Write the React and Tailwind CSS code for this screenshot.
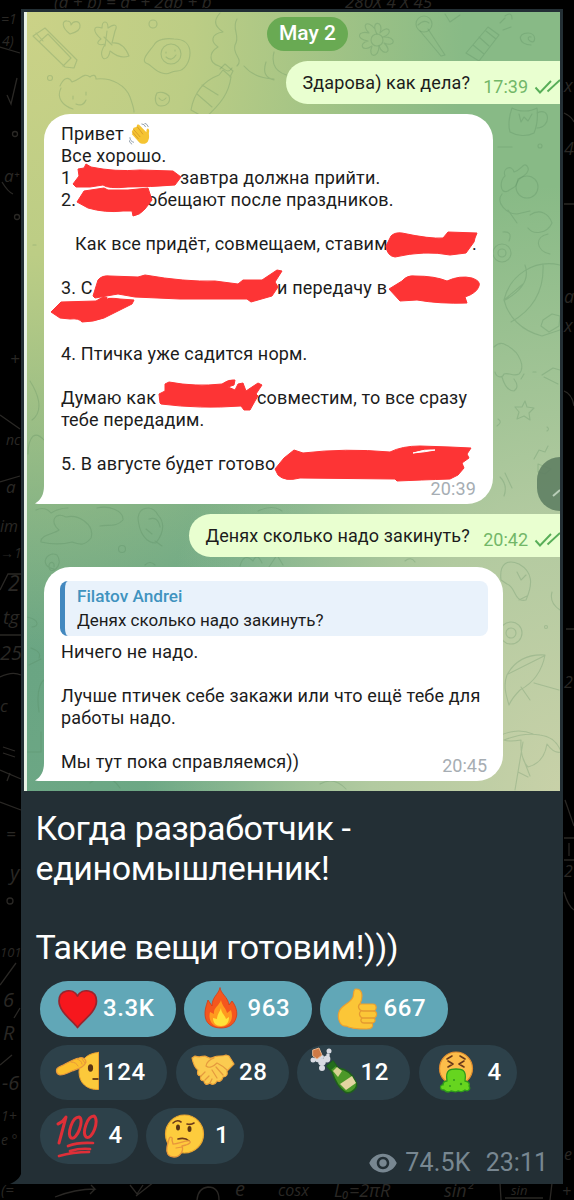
import React from 'react';
import { MdRemoveRedEye } from 'react-icons/md';

const App = () => (
    <div className="relative w-[574px] h-[1200px] bg-black overflow-hidden font-['Roboto','Noto_Sans',sans-serif]">

        <Formulas />

        {/* POST */}
        <div className="relative ml-[21px] mt-[9px] w-[542px] h-[1175px] bg-[#232f35] flex flex-col">
            <svg viewBox="0 0 12 14" className="absolute -left-[11px] bottom-0 w-3 h-3.5" fill="#232f35">
                <path d="M12 0C11 7 7 11 0 14h12z" />
            </svg>

            <Chat />

            <div className="pl-[14.5px] pt-[18px] text-[34px] leading-[39.7px] text-white tracking-[-0.4px]">
                <p>Когда разработчик -</p>
                <p>единомышленник!</p>
                <p>&nbsp;</p>
                <p>Такие вещи готовим!)))</p>
            </div>

            {/* REACTIONS */}
            <div className="absolute left-[18.5px] top-[972px] right-[15px] flex flex-col gap-2">
                <div className="flex gap-[8.5px]">
                    <Reaction active className="w-[136px]" icon={<Heart />} count="3.3K" />
                    <Reaction active className="w-[127.5px]" icon={<Fire />} count="963" />
                    <Reaction active className="w-[127.5px]" icon={<Thumb />} count="667" />
                </div>
                <div className="flex gap-[8.5px]">
                    <Reaction className="w-[127.5px]" icon={<Salute />} count="124" />
                    <Reaction className="w-[113px]" icon={<Handshake />} count="28" />
                    <Reaction className="w-[113px]" icon={<Champagne />} count="12" />
                    <Reaction className="w-[98px]" icon={<Sick />} count="4" />
                </div>
                <div className="flex gap-[8.5px]">
                    <Reaction className="w-[98px]" icon={<Hundred />} count="4" />
                    <Reaction className="w-[98px]" icon={<Thinking />} count="1" />
                    <div className="ml-auto mt-[38px] flex items-center text-[25px] leading-[34px] text-[#788791]">
                        <MdRemoveRedEye className="w-[30px] h-[30px] mr-[7px]" />
                        <span className="mr-[15px] tracking-[0.2px]">74.5K</span>
                        <span>23:11</span>
                    </div>
                </div>
            </div>
        </div>
    </div>
);

const Chat = () => (
    <div className="relative ml-[3px] mt-[3px] w-[536px] h-[779px] shrink-0 overflow-hidden border-l-[3px] border-[#e9f2e6] flex flex-col bg-[radial-gradient(ellipse_at_0%_0%,#cbd287_0%,#bccd85_22%,transparent_58%),radial-gradient(ellipse_at_100%_100%,#c8d1a8_0%,#b2caa0_25%,transparent_55%),radial-gradient(ellipse_at_0%_85%,#6aa583_0%,#6ea986_30%,transparent_65%)] bg-[#88ba86]">
        <Wallpaper />

        <div className="relative mt-[5px] ml-[240px] w-[81px] h-[34px] rounded-full bg-[#69aa53] text-white text-[21px] font-medium flex items-center justify-center whitespace-nowrap">
            May 2
        </div>

        <Outgoing className="w-[274px]" text="Здарова) как дела?" time="17:39" />

        {/* LONG MESSAGE */}
        <div className="relative ml-[17px] mt-2.5 w-[449px] h-[390px] shrink-0 rounded-[26px] rounded-bl-none bg-white pl-[17px] pt-[9px] text-[18px] leading-[22px] tracking-[0.16px] text-[#1c1c1c] whitespace-nowrap">
            <Tail />
            <p className="flex items-center">Привет <Wave /></p>
            <p>Все хорошо.</p>
            <p className="flex"><span className="w-[119px]">1</span>завтра должна прийти.</p>
            <p className="flex"><span className="w-[86px]">2.</span>обещают после праздников.</p>
            <p>&nbsp;</p>
            <p className="flex pl-[14px]"><span className="w-[397px]">Как все придёт, совмещаем, ставим</span>.</p>
            <p>&nbsp;</p>
            <p className="flex"><span className="w-[216px]">3. С</span>и передачу в</p>
            <p>&nbsp;</p>
            <p>&nbsp;</p>
            <p>4. Птичка уже садится норм.</p>
            <p>&nbsp;</p>
            <p className="flex"><span className="w-[196px]">Думаю как</span>совместим, то все сразу</p>
            <p>тебе передадим.</p>
            <p>&nbsp;</p>
            <p>5. В августе будет готово</p>
            <Scribbles />
            <span className="absolute right-[17px] bottom-[4px] text-[18px] text-[#a6adb3]">20:39</span>
        </div>

        <Outgoing className="w-[371px]" text="Денях сколько надо закинуть?" time="20:42" />

        {/* REPLY */}
        <div className="relative ml-[17px] mt-2.5 w-[459px] h-[214px] shrink-0 rounded-[26px] rounded-bl-none bg-white pl-[16px] pt-[14px] text-[18px] leading-[22px] text-[#1c1c1c] whitespace-nowrap">
            <Tail />
            <div className="w-[428px] h-[55px] rounded-[8px] bg-[#e9f2fb] border-l-[5px] border-[#4288bf] pl-[12px] pt-[4px]">
                <p className="text-[17.2px] font-medium text-[#4093bf]">Filatov Andrei</p>
                <p className="mt-[2px] text-[17px]">Денях сколько надо закинуть?</p>
            </div>
            <div className="pl-[1px] pt-[5px] tracking-[0.16px]">
                <p>Ничего не надо.</p>
                <p>&nbsp;</p>
                <p>Лучше птичек себе закажи или что ещё тебе для</p>
                <p>работы надо.</p>
                <p>&nbsp;</p>
                <p>Мы тут пока справляемся))</p>
            </div>
            <span className="absolute right-[16px] bottom-[4px] text-[18px] text-[#a6adb3]">20:45</span>
        </div>

        {/* SCROLL BUTTON */}
        <div className="absolute -right-[23px] top-[445px] w-[46px] h-[54px] rounded-full bg-[#5f7f63]/90">
            <svg viewBox="0 0 46 54" className="w-full h-full" fill="none" stroke="#b9cdb8" strokeWidth="2">
                <path d="M16 39l7-6" />
            </svg>
        </div>
    </div>
);

const Outgoing = ({ text, time, className }) => (
    <div className={`relative self-end mt-2.5 h-[43px] shrink-0 rounded-l-full rounded-tr-[10px] bg-[#e9ffd0] pl-[16.5px] flex items-center text-[18px] text-[#1c1c1c] whitespace-nowrap ${className}`}>
        <span className="grow -mt-[1px] tracking-[0.12px]">{text}</span>
        <span className="text-[#72b768] mt-[8px]">{time}</span>
        <svg viewBox="0 0 26 16" className="w-[26px] h-4 ml-[6px] mt-[9px]" fill="none" stroke="#58ae58" strokeWidth="1.9">
            <path d="M1.500 8.500l4.500 5L17 2M13.500 12.500L26 1" />
        </svg>
    </div>
);

const Tail = () => (
    <svg viewBox="0 0 12 18" className="absolute -left-[9px] bottom-0 w-3 h-[18px]" fill="#fff">
        <path d="M9 0C9 8 6 14 0 17.500L3 18h9V0z" />
    </svg>
);

const Reaction = ({ icon, count, active, className }) => (
    <div className={`h-[55.5px] shrink-0 rounded-full pl-[14px] flex items-center text-white text-[24px] font-medium ${active ? 'bg-[#61a7b7]' : 'bg-[#2d414a]'} ${className}`}>
        <div className="w-11 h-11 shrink-0">{icon}</div>
        <span className="ml-[5.5px] min-w-[25px] text-center tracking-[0.6px] -mt-[1px]">{count}</span>
    </div>
);

/* red marker strokes over the private parts */
const Scribbles = () => (
    <svg viewBox="44 114 449 390" className="absolute left-0 top-0 w-[449px] h-[390px] overflow-visible" fill="#fd3435" stroke="#fd3435" strokeWidth="1" strokeLinejoin="round">
        <path d="M73 184L79 176 78 169 84 168 86 164 91 167Q115 172 140 170L173 171 181 177 175 185Q150 187 128 187 108 189 103 185L90 187 76 187z" />
        <path d="M77 202L84 191 104 188 108 190 128 190 148 188 152 200 145 209Q140 215 133 216L132 211 123 211Q105 213 88 208z" />
        <path d="M386 246L391 236Q395 232 402 233 430 239 443 238L448 232 477 233 475 238 474 242 466 253 450 255Q425 250 395 257 387 256 386 246z" />
        <path d="M389 289L402 281Q407 275 415 276 435 276 447 281 460 275 472 278 481 281 479 286 477 293 465 297L467 303Q440 304 417 300L400 301z" />
        <path d="M93 296L98 280Q102 275 110 276L138 277 145 275Q185 282 215 281L238 284 243 280 262 280 277 270 282 271 275 282 278 287 272 296 251 302 247 299 180 299 135 297 118 294 95 298z" />
        <path d="M51 312L61 302 96 301 103 297 120 299 134 300 132 304Q120 310 104 318 93 322 82 322 79 318 70 319L60 318z" />
        <path d="M160 403L159 394 165 391 165 384 169 382Q195 387 222 384 229 379 235 380L234 385 228 387 235 390 238 384 243 383 246 391 258 383 262 385 256 394 258 396 255 401 250 410 244 410 241 406Q200 409 161 404z" />
        <path d="M275 469L284 458 294 450 303 453Q345 448 390 452 402 446 420 446L450 447 471 448 467 454 469 458 462 463 464 468 458 475 450 479Q420 480 397 481L395 479 300 478Q285 482 278 475z" />
        <path d="M413 453q12-4 22-3-10 2-22 3zM107 298q8-3 13-1" fill="#fff" stroke="#fff" strokeWidth="1" />
    </svg>
);

/* chat background doodles */
const Wallpaper = () => (
    <svg viewBox="27 12 533 779" className="absolute inset-0 w-[533px] h-[779px]" fill="none" stroke="#4f8258" strokeOpacity="0.24" strokeWidth="1.1" strokeLinecap="round" strokeLinejoin="round">
        <path d="M33 36l12-8 32 32-3 8-9-1zM39 42l9-8M63 66l8-8M36 33l7 8M48 34l23 24" />
        <path d="M70 34c-10-8-7-14-3-13 3 0 4 2 4 4 2-4 8-5 9 0 1 6-6 8-10 9z" />
        <path d="M101 39c-9-8-8-14 1-11 0-8 6-8 6 0 7-5 10-3 7 3l-3 12c7-1 13 3 17 13-7 3-14-1-19-5-1 8-7 10-8 5-2-5 2-9 3-12-7 2-10-1-4-5zM104 37l8 8M107 31l-2 15" />
        <path d="M154 45c3-6 13-7 20-6 10 0 16 5 16 14 0 8-5 18-13 18s-7 5-15 2c-8-2-10-8-16-10-5-3 2-10 8-18z" />
        <circle cx="171" cy="54" r="10" /><path d="M166 52v1M175 50v1M166 57q6 5 10-2" />
        <path d="M220 13c-8 9-4 14 3 19-13 2-12 10-5 15-10 6-9 16 1 19 7 4 9 8 13 2M237 19c-6 10 4 17-2 26-3 10 9 14 2 21" />
        <path d="M223 70l8 7c-2 15-9 26-26 41l-14-8c3-17 12-29 28-35zM202 85l16 10M197 94l15 13M220 69l5-5 8 7-3 6" />
        <path d="M60 86c3-7 8-11 12-4 9-3 12-10 18-5 2-2 6-3 6 2 16-2 30 7 34 18 2 6 4 11 4 15M61 88c-5 10 2 18 12 21M73 96v3M86 92v3M76 104q7 3 10-4" />
        <path d="M157 93c4-2 9 0 12 3 2 6-2 10-8 10s-7-8-4-13zM159 98q3 5 7 0" /><circle cx="50" cy="78" r="2.5" /><circle cx="153" cy="24" r="4" />
        <circle cx="377" cy="40" r="6" /><path d="M377 34c-8-14 8-14 3-1 9-10 14 1 3 4 14-1 13 11 1 6 10 9-1 14-5 3 0 13-12 12-7 0-10 7-14-3-4-5-13-2-10-11 1-8-8-8-2-14 6-4" />
        <circle cx="424" cy="24" r="8" /><path d="M420 31l21 25 4-1-17-26M418 25q6-6 11-2" />
        <path d="M466 53l22-26 11 8-20 26zM473 45l11 9M479 37l10 9M486 31l10 8M500 23l5-5M503 30l8-3M505 16q7-5 7 3" />
        <path d="M531 45c-12 0-15-12-3-12 9 0 8 12 2 8-3-2-2-5 1-4" /><path d="M445 14l5 8 10-7M291 76q-22-4-17-24M274 80q-13-3-8-18M244 66q10 12 30 13" />
        <path d="M512 108c-3 8-4 18-2 24 7 4 17 5 24 1 3-7 4-16 3-25-7 4-18 4-25 0zM537 113c14-7 14 15 0 15M519 114l2 8 3-5 4 4 4-7" />
        <path d="M505 176c-3-8 7-12 9-4 8-2 9-10 13-6 4 5-2 10-9 13-1 10-6 8-10 12-9 4-8-12-3-15z" /><circle cx="527" cy="187" r="11" /><path d="M502 194c-7 9 5 20 15 20l13-3M530 215c10-7 19-1 22 8-5 11-19 12-24 5M508 210l9 13M498 147h14" /><circle cx="540" cy="146" r="2" />
        <circle cx="502" cy="253" r="9" /><circle cx="502" cy="253" r="4" /><path d="M503 232q10-1 6 9M548 234c-14 3-12 17 2 20" />
        <path d="M560 265c-26-6-50 10-56 35 4 17 18 31 38 36l18-6M525 265q7 20-20 35M543 264q2 39-32 58M504 300l19-16M543 320l9-6 8 2-1 10-10 6-8-6z" />
        <path d="M494 347q6-6 12-2c15 7 19 23 13 29-6 3-10-2-15 0-2 5-8 3-9-2M502 377q4 14 12 14 6-4 0-12M533 372h3M524 374l-3 5M542 375l11-7 7 2M544 377l14 7" />
        <path d="M525 401l2 6 7 1-5 5 1 7-6-4-7 3 2-7-4-5h7zM498 419q5 3-1 7M547 427q3 2 0 4M534 459l5-9 6 2 3-6M538 464l13 5-6 5-7-2zM500 477q8 8 4 19M512 488l-7-15" />
        <path d="M32 420c13-10 5-28-2-39M44 440c-13-14-16 6-16 14M33 245h3" />
        <path d="M36 510q9-4 15 3 8-5 17-5M41 542c-1-7 13-8 18-12-10-8-4-19 7-13 13-3 29 8 25 21-7 9-12 6-19 4-11 3-22 2-31 0zM97 508c12-3 27 3 26 12-7 8-17 4-23 6" />
        <path d="M138 518c1-11 14-14 20-3 9 10 4 20-2 28-10 0-17-10-18-25zM149 519q9-3 11 8M146 529l6 5M155 541l7 5" /><circle cx="122" cy="549" r="3.5" />
        <path d="M54 569c-16-3-7-19 3-14 8 11-8 22-8 11 0-5 6-5 5 1M145 565q5-5 10 0M182 578h9v-11M240 566q4-14 13-5 4-9 9 2M269 567l8-12 6 10M282 511q-9-7-24 0" />
        <path d="M27 617c14 3 11 10 5 10M29 665l12-6M39 712c-4-27 5-32 5-32M27 752h14v-20M31 648q11 4 8 10" />
        <path d="M501 580c-2-17 7-21 18-16 14 8 14 20 7 36-12 3-10-13-19-16zM517 572l4 8 5-5M519 600l8-4M552 592q-3 11 8 18" /><circle cx="511" cy="633" r="11" /><circle cx="511" cy="633" r="5" />
        <path d="M507 675c8-15 21-21 38-20-3 16-12 28-25 35-8 8-11 15-11 15-3-10-6-20-2-30zM508 674l36-18M534 683l25 7M521 687l9 13" /><circle cx="546" cy="627" r="1.5" />
        <path d="M504 740q20-8 36-5 16 2 21 17-7 2-14-8-3 19-19 23-8-8-7-27-12 2-17 0M523 742l-8 48M518 772l10 5M523 758l7 18M499 736q18-9 34-2" />
        <path d="M90 783q18-13 30 5M320 784q14-8 26 5M405 561q6-5 10 1" />
    </svg>
);

/* dark formulas behind the post */
const Formulas = () => (
    <svg viewBox="0 0 574 1200" className="absolute inset-0 w-[574px] h-[1200px] font-['Open_Sans',sans-serif] italic" fill="#2a2825" fontSize="17">
        <text x="54" y="8">(a + b) = a² + 2ab + b</text>
        <text x="345" y="8">280X  4  X  45</text>
        <text x="1" y="24" fontSize="14">=1</text>
        <text x="2" y="46" fontSize="14">4)</text>
        <text x="4" y="182">a⁺</text>
        <text x="10" y="365">+</text>
        <text x="6" y="445" fontSize="14">nc</text>
        <text x="6" y="493">a</text>
        <text x="0" y="532" fontSize="16">im</text>
        <text x="0" y="558" fontSize="14">→1</text>
        <text x="8" y="591" fontSize="21">2</text>
        <text x="3" y="624" fontSize="19">tg</text>
        <text x="0" y="660" fontSize="20">25</text>
        <text x="0" y="712">c</text>
        <text x="6" y="840">=</text>
        <text x="10" y="880" fontSize="20">y</text>
        <text x="0" y="957" fontSize="13">101</text>
        <text x="3" y="1007" fontSize="20">6</text>
        <text x="3" y="1040" fontSize="20">R</text>
        <text x="2" y="1090" fontSize="20">-6</text>
        <text x="1" y="1121" fontSize="14">1+</text>
        <text x="1" y="1145" fontSize="14">e °</text>
        <text x="1" y="1195" fontSize="15">(=</text>
        <text x="564" y="92" fontSize="18">x</text>
        <text x="564" y="155" fontSize="18">4</text>
        <text x="564" y="303" fontSize="18">a</text>
        <text x="564" y="332" fontSize="18">x</text>
        <text x="564" y="688" fontSize="16">2</text>
        <text x="564" y="877" fontSize="16">2</text>
        <text x="564" y="1160" fontSize="16">e</text>
        <text x="235" y="1196" fontSize="20">e</text>
        <text x="278" y="1196" fontSize="16">cosx</text>
        <text x="334" y="1197" fontSize="18">L₀=2πR</text>
        <text x="444" y="1197" fontSize="18">sin²</text>
        <text x="511" y="1195" fontSize="13">sin</text>
        <text x="562" y="1197" fontSize="16">+</text>
        <g fill="none" stroke="#2a2825" strokeWidth="1.3">
            <path d="M0 47l20 6M7 95l4 9 6-26M2 182q6 10 11 12M0 415l20 14M0 482l20-6M0 590l8-16h13M0 635h21M0 677q12-6 21-2M3 747l12 4M3 753l12 4M0 770l21 9M10 773l-3 8M0 802l21 8M0 985l16-22M14 1018l6-10M0 1065l12-10" />
            <circle cx="10" cy="901" r="3" /><circle cx="15" cy="134" r="2.5" /><circle cx="17" cy="217" r="2.5" />
            <path d="M55 1197q20-8 40-8l-4-4M95 1189l-5 5M130 1185l7 9 6-9M136 1196l18-14M197 1200q1-12 11-13 11 0 11 13M500 1183l1 17M552 1183l-2 17M505 1198h38M564 113q8 4 10 9M564 204h10M564 391q8 3 10 15M565 800l9 26M564 838h10M569 843v13M564 860h10M564 892q4 14 10 18M566 629h8" />
        </g>
    </svg>
);

const svgProps = { viewBox: '0 0 44 44', className: 'w-11 h-11 overflow-visible', strokeLinecap: 'round', strokeLinejoin: 'round' };

const Wave = () => (
    <svg viewBox="0 0 24 24" className="w-[22px] h-[22px] ml-[5px]" strokeLinecap="round">
        <path d="M3 12l8 9c3 3 9 2 10-2 2-4 0-6 1-10 0-4-3-4-3 0v1L11 2c-2-1-3 0-2 2L6 5c-1 0-2 1-1 2l-1 1c-1 1-1 1 0 3z" fill="#f5c432" />
        <path d="M9 4l6 8M5 7l7 8M4 10l6 7" stroke="#d89a28" strokeWidth="1" fill="none" />
        <path d="M14 1q3 0 4 3M17 0q3 1 4 4M1 16q0 4 4 5M0 19q1 3 3 4" stroke="#8b98a5" strokeWidth="1" fill="none" />
    </svg>
);

const Heart = () => (
    <svg {...svgProps}>
        <path d="M23.500 40.500C19 34 5 25 5 14 5 2.500 19 .5 23.500 9 28 .5 42.500 2.500 42.500 14c0 11-14.500 20-19 26.500z" fill="#f6171d" stroke="#99242d" strokeWidth="1.7" />
    </svg>
);

const Fire = () => (
    <svg {...svgProps}>
        <path d="M22 1c1 6 8 9 9 17l3-4c4 5 6 12 4 17-2 7-8 10-15 10S9 38 7.500 31C6 25 8 19 10 13l4 6C14 10 20 8 22 1z" fill="#f4561e" stroke="#d93a12" strokeWidth=".8" />
        <path d="M23 13c1 6 5 8 6 13l4-3c3 9-1 16-10 17-9 0-13-7-11-15l4 2c-1-6 5-8 7-14z" fill="#ff9a1f" />
        <path d="M23 21c0 5 4 7 5 11l3-2c0 6-3 9-8 9s-8-3-8-8l4 1c0-5 3-7 4-11z" fill="#ffe23a" />
    </svg>
);

const Thumb = () => (
    <svg {...svgProps}>
        <path d="M5 25c2-7 11-8 14-15 1-3 0-8 3-8 7 0 7 8 4 15h13c4 0 4 6 1 7 4 1 3 6 0 7 2 2 1 5-2 5 2 4-1 6-5 6-9 0-16 0-21-3-6 1-9-8-7-14z" fill="#fbc637" stroke="#eda02f" strokeWidth="1.2" />
        <path d="M26 17c-3 2-1 7 3 7h11M27 24c-3 2-1 7 2 7h11M28 31c-2 2-1 5 2 5h8" stroke="#e59a31" strokeWidth="1.3" fill="none" />
    </svg>
);

const Salute = () => (
    <svg {...svgProps}>
        <path d="M44.500 2.500v37C33 40 25 33 25 22 25 11 33 3 44.500 2.500z" fill="#fcc93b" stroke="#eda02f" strokeWidth="1" strokeLinejoin="miter" />
        <ellipse cx="36.5" cy="18" rx="2.6" ry="3.7" fill="#5a3413" />
        <path d="M38.500 29h6" stroke="#5a3413" strokeWidth="1.8" strokeLinecap="butt" />
        <path d="M5 17c5-2 14-8 20-9 4-1 7 1 7 4-2 6-9 7-14 9-4 2-8 4-12 4-4-1-5-6-1-8z" fill="#fbc02d" stroke="#e8983b" strokeWidth="1.2" />
        <path d="M17 12c4 0 6 2 7 4M23 9c3 1 5 3 5 5M28 9l3 4" stroke="#e8983b" strokeWidth="1" fill="none" />
    </svg>
);

const Handshake = () => (
    <svg {...svgProps}>
        <path d="M2 8l3-2c5 2 7 0 10 0 4 2 5 3 9 1s8 0 12-2l3 1 5 8-7 7c1 4-1 6-4 6-1 4-4 5-6 4-2 4-5 4-7 2-4 3-6 0-6-2-4 0-4-3-3-5-4 0-4-3-3-6C5 18 3 13 2 8z" fill="#fbcb50" stroke="#eda23a" strokeWidth="1.2" />
        <path d="M24 8c-4 1-8 5-8 8 3 3 8 0 11-3 4 2 7 4 10 7M26 17l7 8M22 20l5 8M11 26l4-4M15 30l4-4M20 33l2-4" stroke="#e59a3e" strokeWidth="1.2" fill="none" />
    </svg>
);

const Champagne = () => (
    <svg {...svgProps}>
        <g fill="#d8dbe2">
            <circle cx="2" cy="10" r="2.5" /><circle cx="7" cy="9" r="3.2" /><circle cx="11" cy="12" r="3.8" /><circle cx="16" cy="9" r="3.4" /><circle cx="18" cy="1" r="2.5" /><circle cx="17" cy="5" r="1.8" /><circle cx="11" cy="18" r="3" /><circle cx="11" cy="7" r="2" />
        </g>
        <path d="M2 0l6-2 3 7-5 4-4-3z" fill="#cf7a45" stroke="#eab58c" strokeWidth="1" />
        <path d="M16 16l6-5 5 7c8 1 14 5 18 14 3 6-6 13-11 10-6-4-10-11-13-20z" fill="#4c9828" stroke="#1e611b" strokeWidth="1.5" />
        <path d="M22 21l4-4 5 4-4 6z" fill="#d9d294" /><path d="M29 34l12-8 4 7-10 7z" fill="#e3d4a1" />
        <path d="M16 16l6-5 3 5-5 4z" fill="#246c1d" />
    </svg>
);

const Sick = () => (
    <svg {...svgProps}>
        <circle cx="23" cy="18.5" r="16.5" fill="#fdbd4a" stroke="#e18c2e" strokeWidth="1.2" />
        <path d="M14 9l5-3M32 9l-5-3M15 11l5 3-5 3M31 11l-5 3 5 3" stroke="#69381b" strokeWidth="1.6" fill="none" />
        <path d="M14 31c-2-12 4-12 9-12s11 0 9 12c6 1 4 5 4 5 2 3-1 6-4 4-3 3-5 1-7 1-3 2-5 0-7 0-3 2-6 0-7-1-5 0-4-6-1-5 0-3 2-4 4-4z" fill="#66d51f" stroke="#2d9a1b" strokeWidth="1.3" />
        <circle cx="21" cy="30" r="1" fill="#30961d" /><circle cx="28" cy="34" r="1.2" fill="#30961d" /><circle cx="17" cy="36" r=".9" fill="#30961d" />
    </svg>
);

const Hundred = () => (
    <svg {...svgProps} fill="none" stroke="#df2f38" strokeWidth="3">
        <path d="M4 10q5-2 8-7L5 29M25 3C18 3 13 20 17 24c6 3 14-19 8-21zM40 2c-7 0-12 17-8 21 6 4 14-17 8-21z" />
        <path d="M14 32q10-4 25-3M16 37q10-3 20-2M5 42q14-4 30-4" strokeWidth="2.7" />
    </svg>
);

const Thinking = () => (
    <svg {...svgProps}>
        <circle cx="24.5" cy="20" r="19" fill="#fdcc3d" stroke="#eba62f" strokeWidth="1.2" />
        <ellipse cx="18" cy="13.5" rx="2" ry="3" fill="#5a3413" /><ellipse cx="29.5" cy="15" rx="2" ry="3" fill="#5a3413" />
        <path d="M13 9q4-4 8-1M27 10q4 1 7-1M18 25q7-2 11 2" stroke="#69381b" strokeWidth="1.6" fill="none" />
        <path d="M9 25c1-3 4-2 3 1l1 4c6 0 13-4 16-3s0 3-3 4l-4 1c2 5-2 11-8 11s-8-4-7-10z" fill="#ffc83d" stroke="#e8963b" strokeWidth="1.3" />
        <path d="M16 34l6-1" stroke="#e8963b" strokeWidth="1.2" />
    </svg>
);

export default App;
